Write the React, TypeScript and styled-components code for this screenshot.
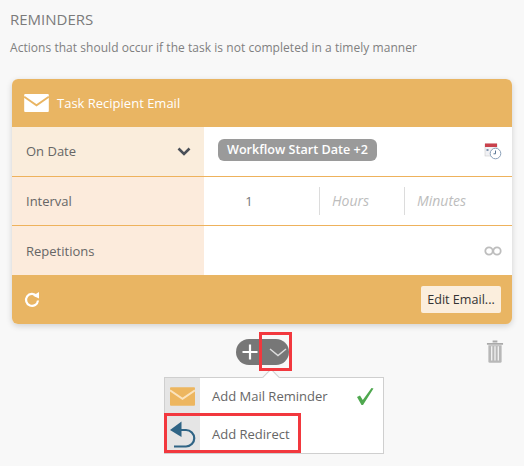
import React from "react";
import styled, { createGlobalStyle } from "styled-components";

const GlobalStyle = createGlobalStyle`
  html, body {
    margin: 0;
    padding: 0;
    background: #f8f8f8;
    font-family: "Open Sans", sans-serif;
  }
`;

const Main = styled.div`
  width: 524px;
  height: 466px;
  overflow: hidden;
  box-sizing: border-box;
  padding: 10px 12px 0;
`;

const Title = styled.div`
  font-size: 15px;
  line-height: 19px;
  color: #7b7b7b;
  margin-left: -2px;
`;

const Subtitle = styled.div`
  font-size: 12px;
  line-height: 17px;
  letter-spacing: 0.04px;
  color: #808080;
  margin: 10px 0 0 -2px;
`;

const Card = styled.div`
  width: 500px;
  margin-top: 23px;
  border-radius: 6px;
  box-shadow: 0 2px 6px rgba(0, 0, 0, 0.16);
  overflow: hidden;
  background: #fff;
`;

const Header = styled.div`
  height: 48px;
  background: #e9b563;
  display: flex;
  align-items: center;
  padding-left: 12px;
  gap: 8px;
  color: #fff;
  font-size: 13px;
  font-weight: 400;
`;

const Row = styled.div<{ $last?: boolean }>`
  display: grid;
  grid-template-columns: 192px 1fr;
  height: ${(p) => (p.$last ? "49px" : "48.5px")};
  border-bottom: ${(p) => (p.$last ? "none" : "1px solid #eeb25c")};
`;

const Label = styled.div<{ $tint: string }>`
  background: ${(p) => p.$tint};
  display: flex;
  align-items: center;
  justify-content: space-between;
  padding: 0 13px 0 14px;
  font-size: 13px;
  color: #666;
`;

const Value = styled.div`
  display: flex;
  align-items: center;
  justify-content: space-between;
  padding: 0 10px 0 14px;
`;

const Pill = styled.div`
  width: 159px;
  height: 22px;
  margin-top: -3px;
  box-sizing: border-box;
  padding-left: 9px;
  display: flex;
  align-items: center;
  border-radius: 6px;
  background: #9a9a9a;
  color: #fff;
  font-size: 12.6px;
  font-weight: 600;
  white-space: nowrap;
`;

const IntervalGrid = styled.div`
  display: grid;
  grid-template-columns: 115px 85px 1fr;
  height: 100%;
  align-items: center;
`;

const IntervalCell = styled.div<{ $divided?: boolean; $muted?: boolean }>`
  height: 28px;
  display: flex;
  align-items: center;
  justify-content: ${(p) => (p.$muted ? "flex-start" : "center")};
  padding-left: ${(p) => (p.$muted ? "12px" : "0")};
  padding-right: ${(p) => (p.$muted ? "0" : "25px")};
  border-left: ${(p) => (p.$divided ? "1px solid #dcdcdc" : "none")};
  font-size: ${(p) => (p.$muted ? "14px" : "13px")};
  font-style: ${(p) => (p.$muted ? "italic" : "normal")};
  color: ${(p) => (p.$muted ? "#bdbdbd" : "#777")};
`;

const Footer = styled.div`
  height: 49px;
  background: #e9b563;
  display: flex;
  align-items: center;
  justify-content: space-between;
  padding: 0 11px 0 12px;
`;

const EditButton = styled.button`
  width: 80px;
  height: 27px;
  padding: 0;
  border: none;
  border-radius: 2px;
  background: #fbeedd;
  color: #333;
  font-family: inherit;
  font-size: 12.6px;
`;

const Controls = styled.div`
  position: relative;
  display: flex;
  align-items: flex-start;
  margin-top: 15px;
  padding-left: 224px;
  height: 100px;
`;

const AddGroup = styled.div`
  width: 53px;
  height: 26px;
  border-radius: 13px;
  background: #777;
  display: flex;
  align-items: center;
  padding-left: 6px;
  box-sizing: border-box;
`;

const Seam = styled.div`
  width: 1px;
  height: 26px;
  background: #a8a8a8;
  margin: 0 7px 0 3px;
`;

const Highlight = styled.div`
  position: absolute;
  border: 3px solid #f2383e;
  box-sizing: border-box;
  pointer-events: none;
`;

const ChevronHighlight = styled(Highlight)`
  left: 247px;
  top: -7px;
  width: 33px;
  height: 39px;
`;

const RedirectHighlight = styled(Highlight)`
  left: 152px;
  top: 74px;
  width: 137px;
  height: 40px;
`;

const Trash = styled.div`
  position: absolute;
  left: 474px;
  top: 0;
`;

const Menu = styled.div`
  position: absolute;
  left: 152px;
  top: 38px;
  width: 220px;
  height: 77px;
  box-sizing: border-box;
  border: 1px solid #cfcfcf;
  background: #fff;
  &::before {
    content: "";
    position: absolute;
    left: 100px;
    top: -7px;
    width: 11px;
    height: 11px;
    background: #fff;
    border-left: 1px solid #cfcfcf;
    border-top: 1px solid #cfcfcf;
    transform: rotate(45deg);
  }
`;

const MenuItem = styled.div<{ $lift?: boolean }>`
  position: relative;
  display: flex;
  align-items: center;
  height: 37.5px;
  font-size: 13px;
  color: #666;
`;

const MenuIcon = styled.div`
  width: 35px;
  height: 100%;
  background: #e5e5e5;
  display: flex;
  align-items: center;
  justify-content: center;
  margin-right: 12px;
`;

const MenuText = styled.span<{ $lift?: boolean }>`
  flex: 1;
  margin-top: ${(p) => (p.$lift ? "-2px" : "0")};
`;

const Check = styled.svg`
  margin-right: 9px;
`;

const Envelope = ({ w, h, fill, line }: { w: number; h: number; fill: string; line: string }) => (
  <svg width={w} height={h} viewBox="0 0 26 19">
    <rect width="26" height="19" rx="1" fill={fill} />
    <path d="M0 3 L13 12 L26 3" fill="none" stroke={line} strokeWidth="2" />
  </svg>
);

const CalendarClock = () => (
  <svg width="18" height="18" viewBox="0 0 18 18">
    <rect x="1" y="2" width="12" height="12" fill="#f1f1f4" stroke="#ccc" strokeWidth="0.6" />
    <rect x="1" y="1.5" width="12" height="3.5" fill="#c9414c" />
    <rect x="2.5" y="7" width="2" height="2" fill="#7f93ad" />
    <circle cx="11.5" cy="11.5" r="5.3" fill="#fff" stroke="#8aa0b8" strokeWidth="1" />
    <path d="M11.5 8.5 V11.8 H9.5" fill="none" stroke="#5a7695" strokeWidth="1" />
  </svg>
);

const Infinity8 = () => (
  <svg width="18" height="10" viewBox="0 0 18 10">
    <circle cx="5" cy="5" r="3.7" fill="none" stroke="#bdbdbd" strokeWidth="1.8" />
    <circle cx="13" cy="5" r="3.7" fill="none" stroke="#bdbdbd" strokeWidth="1.8" />
  </svg>
);

export default function App() {
  return (
    <Main>
      <GlobalStyle />
      <Title>REMINDERS</Title>
      <Subtitle>Actions that should occur if the task is not completed in a timely manner</Subtitle>
      <Card>
        <Header>
          <Envelope w={25} h={18} fill="#fff" line="#e9b563" />
          Task Recipient Email
        </Header>
        <Row>
          <Label $tint="#faeddc">
            On Date
            <svg width="14" height="9" viewBox="0 0 14 9">
              <path d="M1.5 1.5 L7 7 L12.5 1.5" fill="none" stroke="#4a5058" strokeWidth="2.6" />
            </svg>
          </Label>
          <Value>
            <Pill>Workflow Start Date +2</Pill>
            <CalendarClock />
          </Value>
        </Row>
        <Row>
          <Label $tint="#fcebdc">Interval</Label>
          <IntervalGrid>
            <IntervalCell>1</IntervalCell>
            <IntervalCell $divided $muted>Hours</IntervalCell>
            <IntervalCell $divided $muted>Minutes</IntervalCell>
          </IntervalGrid>
        </Row>
        <Row $last>
          <Label $tint="#fcebdc">Repetitions</Label>
          <Value>
            <span />
            <Infinity8 />
          </Value>
        </Row>
        <Footer>
          <svg width="16" height="17" viewBox="0 0 16 17">
            <path d="M12.6 5 A6 6 0 1 0 14 9.5" fill="none" stroke="#fff" strokeWidth="2.2" />
            <path d="M9 4.8 L15 1 L15 7.5 Z" fill="#fff" />
          </svg>
          <EditButton>Edit Email...</EditButton>
        </Footer>
      </Card>
      <Controls>
        <AddGroup>
          <svg width="16" height="16" viewBox="0 0 16 16">
            <path d="M8 0.5 V15.5 M0.5 8 H15.5" stroke="#fff" strokeWidth="2.2" />
          </svg>
          <Seam />
          <svg width="18" height="9" viewBox="0 0 18 9">
            <path d="M1 1 L9 7.5 L17 1" fill="none" stroke="#ddd" strokeWidth="1.5" />
          </svg>
        </AddGroup>
        <Menu>
          <MenuItem>
            <MenuIcon>
              <Envelope w={25} h={19} fill="#edb65f" line="#fbe3bd" />
            </MenuIcon>
            <MenuText $lift>Add Mail Reminder</MenuText>
            <Check width="18" height="19" viewBox="0 0 18 19">
              <path d="M1 10 L4 8.5 L6.8 13 L15.5 1 L17.5 1.5 L7 18 L5.5 18 Z" fill="#4fa84f" />
            </Check>
          </MenuItem>
          <MenuItem>
            <MenuIcon>
              <svg width="27" height="27" viewBox="0 0 27 27">
                <path d="M6 9 H17 A8 8 0 0 1 17 25.5 H5" fill="none" stroke="#2f6485" strokeWidth="2.2" />
                <path d="M12.5 0.5 L1 9 L12.5 16 Z" fill="#2f6485" />
              </svg>
            </MenuIcon>
            <MenuText>Add Redirect</MenuText>
          </MenuItem>
        </Menu>
        <ChevronHighlight />
        <RedirectHighlight />
        <Trash>
          <svg width="18" height="25" viewBox="0 0 19 25">
            <path d="M7 2 H12 M1 4.5 H18" stroke="#aaa" strokeWidth="2" />
            <path d="M2.5 6 H16.5 V23 Q16.5 24.5 15 24.5 H4 Q2.5 24.5 2.5 23 Z" fill="#b8b8b8" />
            <path d="M6 7 V22 M9.5 7 V22 M13 7 V22" stroke="#f2f2f2" strokeWidth="1.4" />
          </svg>
        </Trash>
      </Controls>
    </Main>
  );
}
